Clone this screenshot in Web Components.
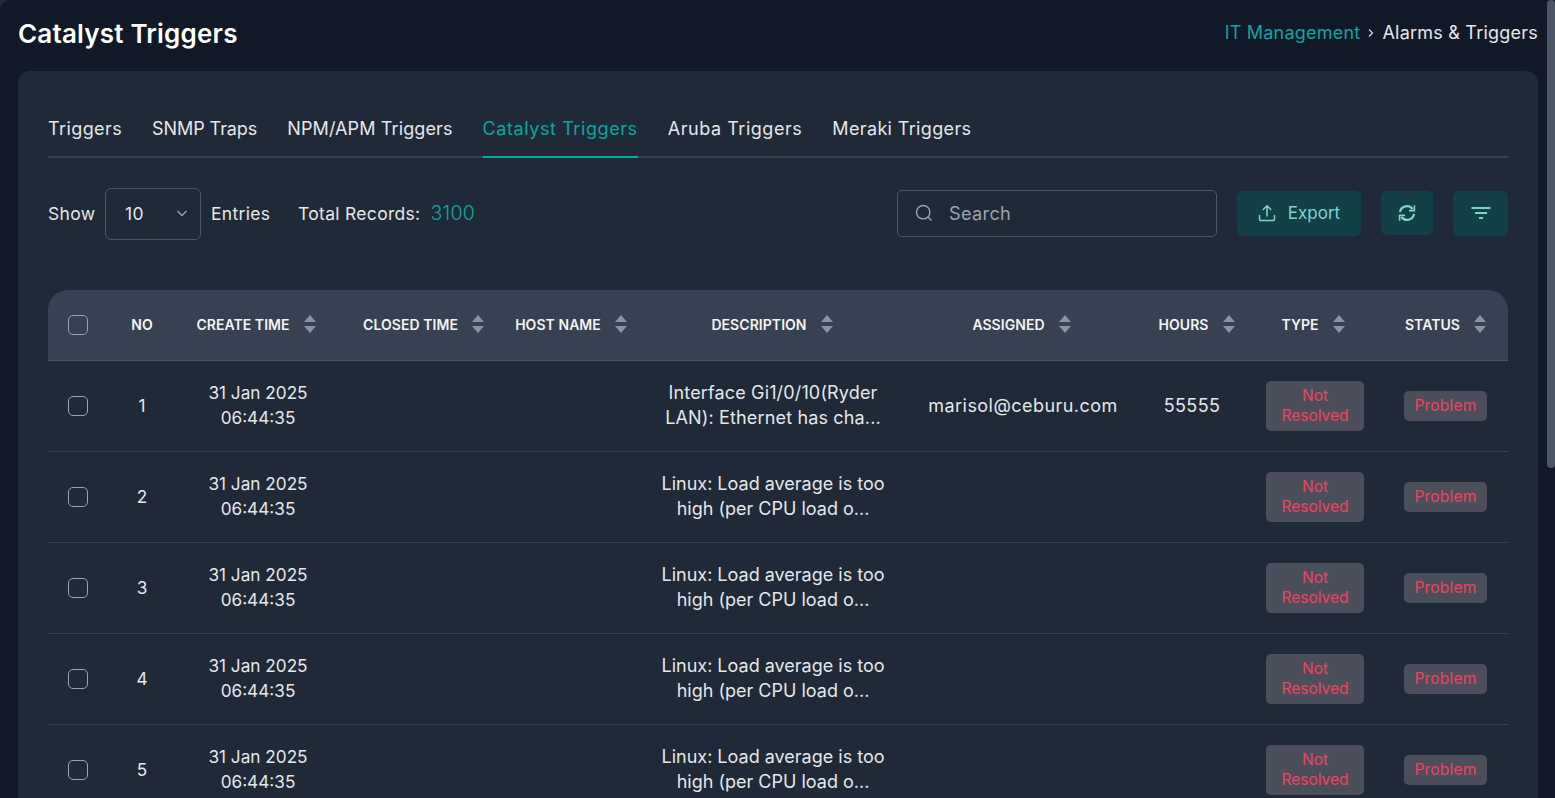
<!DOCTYPE html>
<html>
<head>
<meta charset="utf-8">
<style>
  html, body { margin: 0; height: 100%; overflow: hidden; background: #111827; }
  body { font-family: Inter, "Open Sans", sans-serif; color: #e5e7eb; }
</style>
</head>
<body>
<app-page></app-page>

<template id="tpl-page">
  <style>
    :host { display: flex; height: 798px; overflow: hidden; background: #1f2937; }
    #main { flex: 1; min-width: 0; padding: 0 9px 0 18px; background: #111827; border-top-left-radius: 10px; }
    #head { display: flex; justify-content: space-between; align-items: center; height: 71px; }
    h1 { margin: 0; font-size: 26px; font-weight: 600; color: #fff; letter-spacing: 0.2px; position: relative; top: -2px; }
    #crumb { font-size: 18px; letter-spacing: 0.22px; color: #e5e7eb; display: flex; align-items: center; gap: 6px; position: relative; top: -3px; }
    #crumb a { color: #0aa6a0; }
    #card { background: #1f2937; border-radius: 12px 12px 0 0; padding: 28px 30px 0; height: 727px; box-sizing: border-box; }
    #bar { width: 8px; background: #111827; flex: none; }
    #thumb { height: 468px; background: #4b5563; border-radius: 4px; }
  </style>
  <div id="main">
    <div id="head">
      <h1>Catalyst Triggers</h1>
      <div id="crumb"><a>IT Management</a>
        <svg width="10" height="10" viewBox="0 0 10 10" fill="none" stroke="#d1d5db" stroke-width="1.2"><path d="M3 1.5 6.5 5 3 8.5"/></svg>
        <span>Alarms &amp; Triggers</span></div>
    </div>
    <div id="card">
      <tab-strip></tab-strip>
      <tool-bar></tool-bar>
      <trigger-table></trigger-table>
    </div>
  </div>
  <div id="bar"><div id="thumb"></div></div>
</template>

<template id="tpl-tabs">
  <style>
    :host { display: flex; gap: 30px; height: 59px; box-sizing: border-box; border-bottom: 2px solid #374151; font-size: 18px; }
    span { height: 59px; box-sizing: border-box; padding-top: 19px; color: #e5e7eb; white-space: nowrap; }
    span.on { color: #0aa6a0; border-bottom: 2px solid #0aa6a0; }
  </style>
  <span style="letter-spacing:.4px">Triggers</span><span style="letter-spacing:-.08px">SNMP Traps</span><span style="letter-spacing:.12px">NPM/APM Triggers</span><span class="on" style="letter-spacing:.58px">Catalyst Triggers</span><span style="letter-spacing:.54px">Aruba Triggers</span><span style="letter-spacing:.35px">Meraki Triggers</span>
</template>

<template id="tpl-toolbar">
  <style>
    :host { display: flex; align-items: center; height: 52px; margin-top: 30px; font-size: 17.5px; letter-spacing: 0.3px; color: #e5e7eb; }
    #show, #ent, #tot { padding-bottom: 2px; }
    #show { width: 47px; }
    #ent { width: 57px; }
    #sel { width: 96px; height: 52px; box-sizing: border-box; border: 1px solid #4b5563; border-radius: 6px; margin: 0 10px; display: flex; align-items: center; justify-content: space-between; padding: 0 12px 2px 19px; }
    #tot { margin-left: 30px; display: flex; align-items: center; gap: 10px; }
    #tot b { font-weight: 300; font-size: 19.5px; color: #0aa6a0; }
    #search { margin: 0 0 2px auto; width: 320px; height: 47px; box-sizing: border-box; border: 1px solid #4b5563; border-radius: 5px; display: flex; align-items: center; gap: 16px; padding-left: 17px; color: #9ca3af; font-size: 18.2px; }
    .btn { background: #134045; color: #7dd3d0; border-radius: 6px; height: 45px; margin-bottom: 2px; display: flex; align-items: center; justify-content: center; letter-spacing: 0; font-size: 17px; }
    #exp { width: 124px; gap: 12px; margin-left: 20px; }
    #ref { width: 52px; height: 44px; margin-left: 20px; }
    #fil { width: 55px; margin-left: 20px; }
  </style>
  <span id="show">Show</span>
  <div id="sel"><span>10</span>
    <svg width="12" height="12" viewBox="0 0 12 12" fill="none" stroke="#9ca3af" stroke-width="1.3"><path d="M1.5 4 6 8.5 10.5 4"/></svg></div>
  <span id="ent">Entries</span>
  <div id="tot"><span>Total Records:</span><b>3100</b></div>
  <div id="search">
    <svg width="18" height="18" viewBox="0 0 18 18" fill="none" stroke="#9ca3af" stroke-width="1.4"><circle cx="8.2" cy="8.2" r="6.7"/><path d="M13 13l3.5 3.5"/></svg>
    <span>Search</span></div>
  <div class="btn" id="exp">
    <svg width="18" height="18" viewBox="0 0 18 18" fill="none" stroke="#7dd3d0" stroke-width="1.5" stroke-linecap="round" stroke-linejoin="round"><path d="M9 12V2M5.2 5.5 9 1.7l3.8 3.8M1.5 11.5v3.2a1.8 1.8 0 0 0 1.8 1.8h11.4a1.8 1.8 0 0 0 1.8-1.8v-3.2"/></svg>
    <span>Export</span></div>
  <div class="btn" id="ref">
    <svg width="18" height="18" viewBox="0 0 18 18" fill="none" stroke="#7dd3d0" stroke-width="2.2"><path d="M2 8.2A7 7 0 0 1 14.6 5M16 9.8A7 7 0 0 1 3.4 13"/><path d="M16.4 1.2V6.6H11M1.6 16.8V11.4H7" stroke-width="1.6"/></svg></div>
  <div class="btn" id="fil">
    <svg width="20" height="14" viewBox="0 0 20 14" fill="none" stroke="#7dd3d0" stroke-width="2"><path d="M0.5 2H19.5M4 7H16M8 12H12"/></svg></div>
</template>

<template id="tpl-table">
  <style>
    :host { display: block; margin-top: 50px; --c: 60px 68px 164px 167px 128px 276px 224px 114px 134px 125px; }
    #hd, .row { display: grid; grid-template-columns: var(--c); box-sizing: border-box; }
    #hd { height: 71px; padding-bottom: 2px; background: #374151; border-radius: 20px 20px 0 0; border-bottom: 1px solid #4b5563; }
    .row { height: 91px; border-bottom: 1px solid #374151; font-size: 17.2px; line-height: 25px; color: #e5e7eb; }
    .cell { display: flex; align-items: center; justify-content: center; text-align: center; min-width: 0; white-space: nowrap; box-sizing: border-box; }
    .up { padding-bottom: 2px; }
    .big { font-size: 18px; }
    .tick { padding-top: 2px; }
  </style>
  <div id="hd"></div>
  <div id="body"></div>
</template>

<template id="tpl-sort">
  <style>
    :host { display: flex; align-items: center; justify-content: center; gap: 14px; font-size: 14px; font-weight: 600; letter-spacing: 0.05px; color: #f3f4f6; white-space: nowrap; height: 100%; }
    svg { flex: none; }
  </style>
  <slot></slot>
  <svg width="12" height="18" viewBox="0 0 12 18" fill="#8b92a0"><path d="M6 0 12 7H0zM6 18 0 11H12z"/></svg>
</template>

<template id="tpl-check">
  <style>
    :host { display: block; width: 20px; height: 20px; box-sizing: border-box; border: 1px solid #9ca3af; border-radius: 5px; }
  </style>
</template>

<template id="tpl-badge">
  <style>
    :host { display: block; box-sizing: border-box; background: #4b4f5c; color: #f43f5e; font-size: 15.5px; line-height: 20px; letter-spacing: 0.2px; border-radius: 5px; padding: 5px 10px; text-align: center; white-space: nowrap; }
    :host([wide]) { width: 98px; letter-spacing: 0; }
  </style>
  <slot></slot>
</template>

<script>
function stamp(el, id) {
  el.attachShadow({ mode: "open" }).appendChild(document.getElementById(id).content.cloneNode(true));
}
class AppPage extends HTMLElement { constructor() { super(); stamp(this, "tpl-page"); } }
class TabStrip extends HTMLElement { constructor() { super(); stamp(this, "tpl-tabs"); } }
class ToolBar extends HTMLElement { constructor() { super(); stamp(this, "tpl-toolbar"); } }
class SortHead extends HTMLElement { constructor() { super(); stamp(this, "tpl-sort"); } }
class TickBox extends HTMLElement { constructor() { super(); stamp(this, "tpl-check"); } }
class RedBadge extends HTMLElement { constructor() { super(); stamp(this, "tpl-badge"); } }

// pad nudges the header a little off its column centre, like the reference
const COLS = [
  ["NO", ""], ["CREATE TIME", "padding-right:4px"], ["CLOSED TIME", ""], ["HOST NAME", ""],
  ["DESCRIPTION", "padding-right:2px"], ["ASSIGNED", "padding-right:3px"], ["HOURS", "padding-left:9px"],
  ["TYPE", "padding-right:6px"], ["STATUS", ""]
];
const LINUX = "Linux: Load average is too<br>high (per CPU load o...";
const ROWS = [
  { no: 1, desc: '<span style="letter-spacing:.15px">Interface Gi1/0/10(Ryder<br>LAN): Ethernet has cha...</span>', who: "marisol@ceburu.com", hrs: "55555" },
  { no: 2, desc: LINUX }, { no: 3, desc: LINUX }, { no: 4, desc: LINUX }, { no: 5, desc: LINUX }
];

class TriggerTable extends HTMLElement {
  constructor() {
    super();
    stamp(this, "tpl-table");
    const root = this.shadowRoot;
    let hd = '<div class="cell tick"><tick-box></tick-box></div>';
    COLS.forEach(([c, pad], i) => {
      hd += i == 0 ? `<div class="cell" style="font-size:14px;font-weight:600;color:#f3f4f6">${c}</div>`
                   : `<div class="cell" style="${pad}"><sort-head>${c}</sort-head></div>`;
    });
    root.getElementById("hd").innerHTML = hd;
    root.getElementById("body").innerHTML = ROWS.map(r => `
      <div class="row">
        <div class="cell"><tick-box></tick-box></div>
        <div class="cell up">${r.no}</div>
        <div class="cell up">31 Jan 2025<br>06:44:35</div>
        <div class="cell"></div>
        <div class="cell"></div>
        <div class="cell big up">${r.desc}</div>
        <div class="cell big up" style="letter-spacing:.45px">${r.who || ""}</div>
        <div class="cell big up" style="letter-spacing:.4px">${r.hrs || ""}</div>
        <div class="cell" style="padding-right:2px"><red-badge wide>Not<br>Resolved</red-badge></div>
        <div class="cell"><red-badge>Problem</red-badge></div>
      </div>`).join("");
  }
}

customElements.define("tab-strip", TabStrip);
customElements.define("tool-bar", ToolBar);
customElements.define("sort-head", SortHead);
customElements.define("tick-box", TickBox);
customElements.define("red-badge", RedBadge);
customElements.define("trigger-table", TriggerTable);
customElements.define("app-page", AppPage);
</script>
</body>
</html>
